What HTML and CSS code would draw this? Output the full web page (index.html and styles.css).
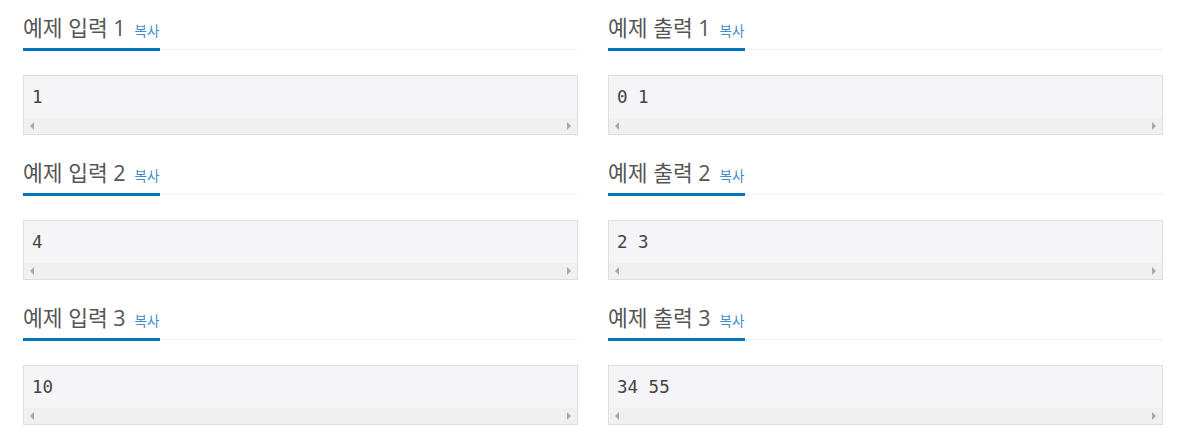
FILE: index.html
```html
<!DOCTYPE html>
<html lang="ko">
<head>
<meta charset="utf-8">
<title>예제</title>
<link rel="stylesheet" href="styles.css">
</head>
<body>
<div class="page">
  <div class="grid">
    <section class="sample">
      <div class="headline"><h2><span class="title">예제 입력 1</span><a class="copy">복사</a></h2></div>
      <div class="pre"><div class="code">1</div><div class="hscroll"><span class="arr left"></span><span class="arr right"></span></div></div>
    </section>
    <section class="sample">
      <div class="headline"><h2><span class="title">예제 출력 1</span><a class="copy">복사</a></h2></div>
      <div class="pre"><div class="code">0 1</div><div class="hscroll"><span class="arr left"></span><span class="arr right"></span></div></div>
    </section>
    <section class="sample">
      <div class="headline"><h2><span class="title">예제 입력 2</span><a class="copy">복사</a></h2></div>
      <div class="pre"><div class="code">4</div><div class="hscroll"><span class="arr left"></span><span class="arr right"></span></div></div>
    </section>
    <section class="sample">
      <div class="headline"><h2><span class="title">예제 출력 2</span><a class="copy">복사</a></h2></div>
      <div class="pre"><div class="code">2 3</div><div class="hscroll"><span class="arr left"></span><span class="arr right"></span></div></div>
    </section>
    <section class="sample">
      <div class="headline"><h2><span class="title">예제 입력 3</span><a class="copy">복사</a></h2></div>
      <div class="pre"><div class="code">10</div><div class="hscroll"><span class="arr left"></span><span class="arr right"></span></div></div>
    </section>
    <section class="sample">
      <div class="headline"><h2><span class="title">예제 출력 3</span><a class="copy">복사</a></h2></div>
      <div class="pre"><div class="code">34 55</div><div class="hscroll"><span class="arr left"></span><span class="arr right"></span></div></div>
    </section>
  </div>
</div>
</body>
</html>
```

FILE: styles.css
```css
html, body {
  margin: 0;
  padding: 0;
  background: #fff;
}

body {
  font-family: "Open Sans", "Noto Sans CJK KR", sans-serif;
  color: #333;
}

.page {
  padding-left: 8px;
}

.grid {
  display: grid;
  grid-template-columns: 585px 585px;
  grid-auto-rows: 145px;
}

.sample {
  padding: 15px 15px 0 15px;
}

.headline {
  display: flex;
  border-bottom: 1px dotted #e2e6ec;
  margin-bottom: 25px;
}

.headline h2 {
  display: flex;
  align-items: baseline;
  margin: 0 0 -2px 0;
  height: 36px;
  box-sizing: border-box;
  padding: 0 1px 0 0;
  font-weight: 400;
  border-bottom: 3px solid #0076c0;
}

.title {
  font-size: 21.5px;
  line-height: 26px;
  color: #555;
  font-family: "Open Sans", "Noto Sans CJK KR", sans-serif;
}

.copy {
  font-size: 13.5px;
  line-height: 16px;
  color: #428bca;
  margin-left: 9px;
  font-family: "Noto Sans CJK KR", sans-serif;
}

.pre {
  border: 1px solid #dedee2;
  background: #f5f5f7;
}

.code {
  height: 42px;
  display: flex;
  align-items: center;
  padding-left: 8px;
  font-family: "DejaVu Sans Mono", monospace;
  font-size: 17.5px;
  color: #444;
  white-space: pre;
}

.hscroll {
  height: 16px;
  background: #f0f0f0;
  display: flex;
  justify-content: space-between;
  align-items: center;
  padding: 0 6px;
}

.arr {
  width: 0;
  height: 0;
  border-top: 4px solid transparent;
  border-bottom: 4px solid transparent;
}

.arr.left {
  border-right: 4px solid #a8a8a8;
}

.arr.right {
  border-left: 4px solid #a8a8a8;
}
```
